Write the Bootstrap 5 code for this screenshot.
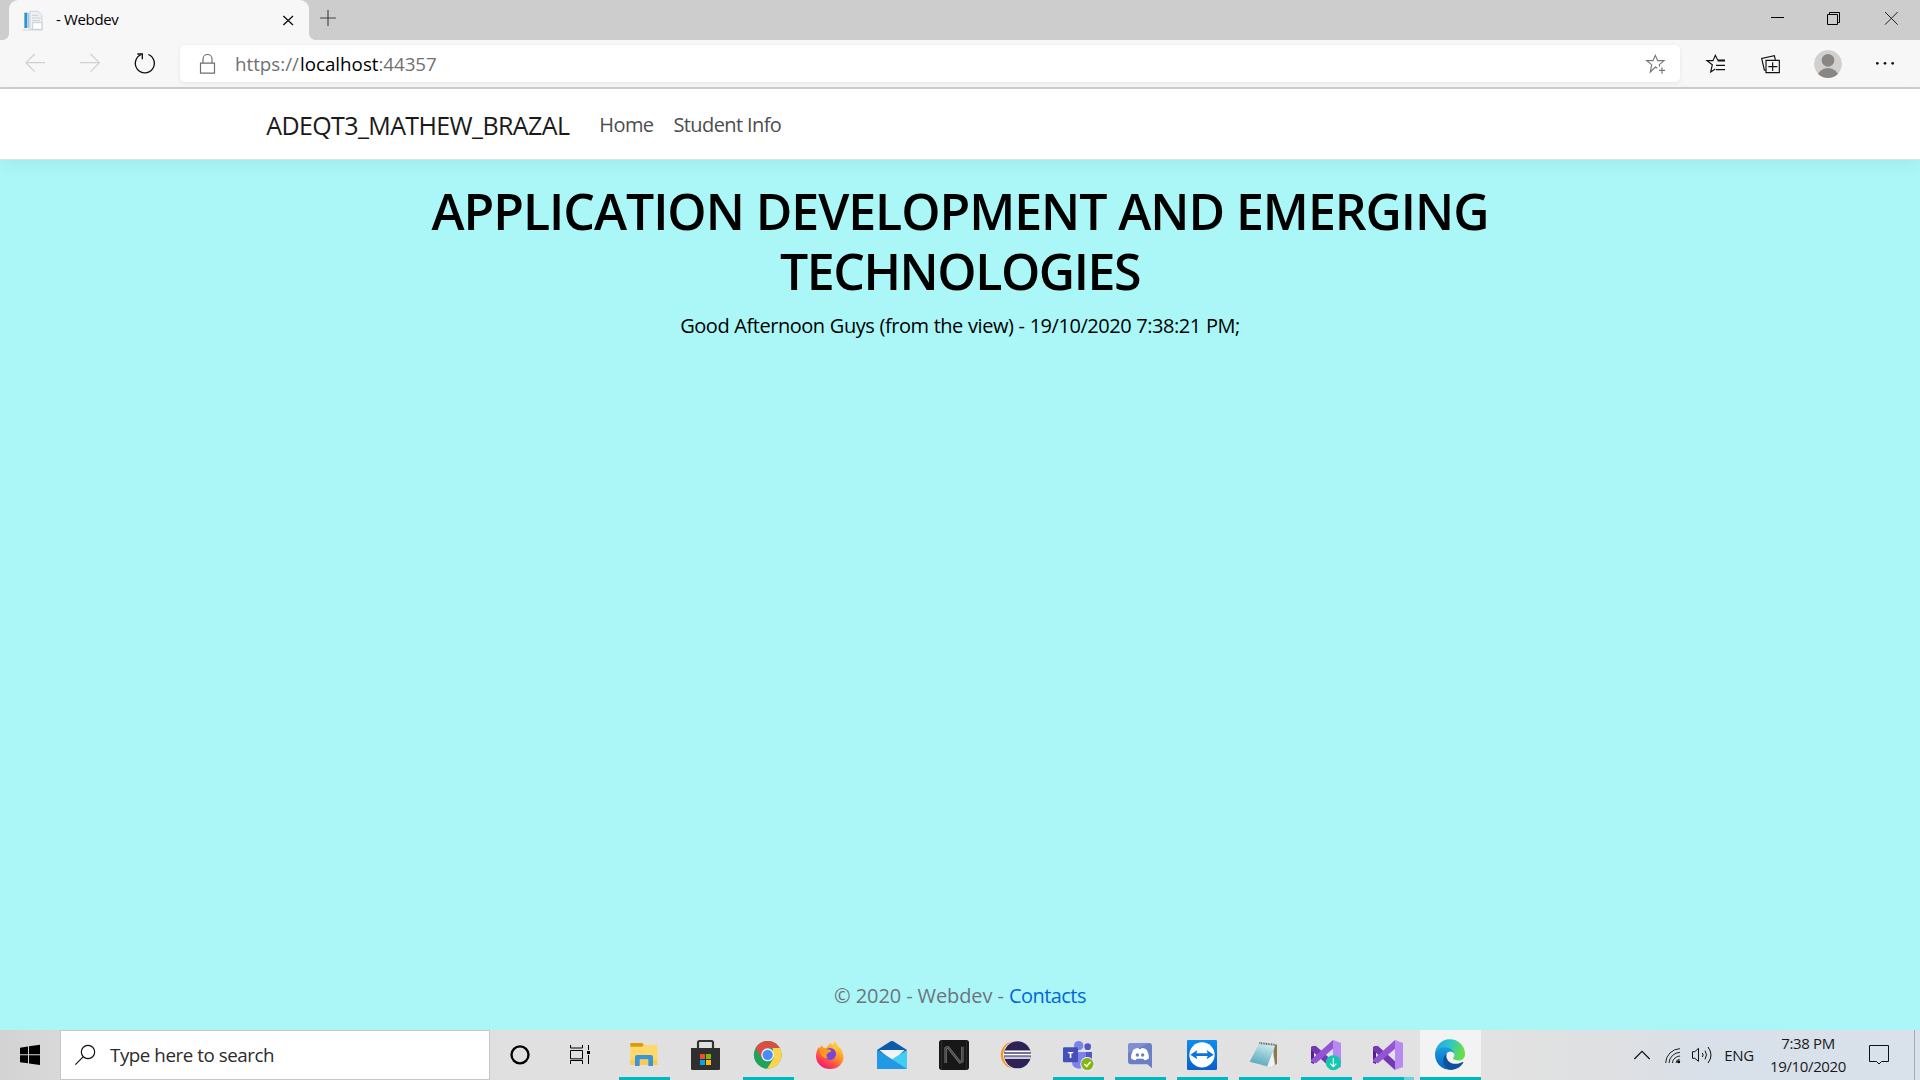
<!DOCTYPE html>
<html lang="en">
<head>
<meta charset="utf-8">
<meta name="viewport" content="width=device-width, initial-scale=1">
<title> - Webdev</title>
<link href="https://cdn.jsdelivr.net/npm/bootstrap@5.3.0/dist/css/bootstrap.min.css" rel="stylesheet">
<style>
html{font-size:20px}
body{font-family:"Open Sans","Noto Sans",sans-serif;height:1080px;overflow:hidden;background:#abf7f8;color:#000}
svg{display:block;flex:none}
span,a{white-space:nowrap}
.tabstrip{height:40px;background:#cdcdcd;padding-left:9px}
.tab-active{width:300px;height:40px;background:#f7f7f7;border-radius:9px 9px 0 0;font-size:15px;letter-spacing:-.35px;position:relative}
.tab-active span{padding-bottom:1px}
.tab-active::before,.tab-active::after{content:"";position:absolute;bottom:0;width:6px;height:6px}
.tab-active::before{left:-6px;background:radial-gradient(circle at 0 0,transparent 5.5px,#f7f7f7 6px)}
.tab-active::after{right:-6px;background:radial-gradient(circle at 100% 0,transparent 5.5px,#f7f7f7 6px)}
.toolbar{height:49px;background:#f7f7f7;border-bottom:2px solid #cdcdcd}
.address{width:1500px;height:37px;background:#fff;border-radius:5px;box-shadow:0 1px 4px rgba(0,0,0,.08);font-size:18.75px;color:#707070}
.address span{padding-top:1px}
.host{margin-left:1px}
.port{letter-spacing:-.08px}
.site-header{height:71px;background:#fff;border-bottom:1px solid #dee2e6;box-shadow:0 5px 15px rgba(0,0,0,.06);z-index:1}
.site-width{width:1425px;max-width:1425px;padding:3px 18.75px 0}
.brand{font-size:25px;letter-spacing:-.61px;color:#1a1a1a;margin-right:30px}
.site-link{font-size:20px;letter-spacing:-.6px;color:#4d4d4d;margin-right:20px;padding-bottom:1px}
.site-main h1{font-size:50px;font-weight:600;line-height:60px;margin:0 0 10px;padding-top:21px}
.line-one{letter-spacing:-1.05px}
.line-two{letter-spacing:-1.45px}
.site-main p{font-size:20px;line-height:30px;letter-spacing:-.46px;word-spacing:.4px}
.site-footer{height:75px;line-height:75px;color:#6c757d;padding-top:3px;letter-spacing:-.1px}
.site-footer a{color:#0366d6;letter-spacing:-.55px}
.taskbar{height:50px;background:linear-gradient(90deg,#d3d3d3 0,#d8d8d8 60px,#e0e0e0 500px,#e2e2e2 1480px,#dfe0e2 1610px,#d8e0ea 1720px,#d9e1ea 1920px)}
.search{width:430px;height:50px;background:#fff;border:1px solid #c6c6c6;font-size:18.75px;letter-spacing:-.45px;color:#2b2b2b}
.app{width:61px;height:50px;margin-right:1px;position:relative}
.running::after{content:"";position:absolute;left:5px;right:5px;bottom:0;height:3px;background:#00b7c3}
.grouped::after{background:linear-gradient(90deg,#00b7c3 41px,#66d4dc 41px)}
.current{background:#f3f3f3}
.current::after{left:0;right:0}
.clock{width:98px;font-size:15px;line-height:23px;letter-spacing:-.35px;color:#1a1a1a;padding-right:2px}
.lang{width:42px;font-size:15px;letter-spacing:-.4px;color:#1a1a1a}
.desk{width:6px;height:50px;border-left:1px solid #a5acb4}
</style>
</head>
<body class="d-flex flex-column">
<div class="tabstrip d-flex">
 <div class="tab-active d-flex align-items-center">
  <svg width="47" height="40" viewBox="27 0 141 120"><path d="M73 38h9v46h-9z" fill="#2f93cf"/><path d="M84 38h4v46h-4z" fill="#9cc8e4"/><path d="M68 90h60" stroke="#c5c9cc" stroke-width="2"/><path d="M90 34h24l12 12v42H90z" fill="#eef1f4" stroke="#c9ced6" stroke-width="2.5"/><path d="M96 46h20M96 54h26M96 62h24" stroke="#cbd0d8" stroke-width="3"/><path d="M98 68h28v20H98z" fill="#fff" stroke="#bfc5cd" stroke-width="2.5"/></svg>
  <span>- Webdev</span>
  <svg class="ms-auto" width="40" height="40" viewBox="807 0 120 120"><path d="M850 48l29 27M879 48l-29 27" stroke="#111" stroke-width="4"/></svg>
 </div>
 <svg width="40" height="40" viewBox="927 0 120 120"><path d="M960 54h48M984 30v48" stroke="#444" stroke-width="3.5"/></svg>
 <div class="d-flex ms-auto">
  <svg width="57" height="40" viewBox="567 0 171 120"><path d="M633 52.5h39" stroke="#000" stroke-width="3"/></svg>
  <svg width="57" height="40" viewBox="738 0 171 120"><path d="M802.500 43.500h30v30h-30zM808.500 43v-5.500h30v30h-5.500" fill="none" stroke="#000" stroke-width="3"/></svg>
  <svg width="57" height="40" viewBox="909 0 171 120"><path d="M975 36l38 38M1013 36l-38 38" stroke="#222" stroke-width="3"/></svg>
 </div>
</div>
<div class="toolbar d-flex align-items-center">
 <svg width="68" height="47" viewBox="0 120 204 141"><path d="M135 188H78M104 162l-26 26 26 27" fill="none" stroke="#cfcfcf" stroke-width="3.500"/></svg>
 <svg width="44" height="47" viewBox="204 120 132 141"><path d="M240 188h58M272 162l26 26-26 27" fill="none" stroke="#cfcfcf" stroke-width="3.500"/></svg>
 <svg width="68" height="47" viewBox="336 120 204 141"><path d="M445 163.500A28.500 28.500 0 1 1 424 163.500" fill="none" stroke="#111" stroke-width="4"/><path d="M412 162h15v16" fill="none" stroke="#111" stroke-width="4"/></svg>
 <div class="address d-flex align-items-center">
  <svg width="55" height="37" viewBox="540 135 165 111"><path d="M601.500 189.500h42v30h-42zM609 189v-12a13 13 0 0 1 27 0v12" fill="none" stroke="#6e6e6e" stroke-width="3.500"/></svg>
  <span>https://</span><span class="host text-black">localhost</span><span class="port">:44357</span>
  <svg class="ms-auto" width="45" height="37" viewBox="225 135 135 111"><path d="M292 205l-6-4-15 15 4-22-15-12h19l7-16 7 16h19l-14 12 1 6M297 211h18M306 202v19" fill="none" stroke="#777" stroke-width="3.500"/></svg>
 </div>
 <div class="d-flex ms-auto">
  <svg width="64" height="47" viewBox="372 120 192 141"><path d="M466 207l-14 9 5-22-16-12h18l7-16 7 14h22M473 183h22M468 196h27M468 209h27" fill="none" stroke="#111" stroke-width="3.500"/></svg>
  <svg width="56" height="47" viewBox="564 120 168 141"><path d="M618 211l-5-1-8-35 38-8 3 12M618 209v9h40v-37h-40v37M638 187v26M625 200h27" fill="none" stroke="#111" stroke-width="3.500"/></svg>
  <svg width="52" height="47" viewBox="732 120 156 141"><clipPath id="av"><circle cx="804" cy="192" r="42"/></clipPath><g clip-path="url(#av)"><circle cx="804" cy="192" r="42" fill="#d2d0ce"/><circle cx="804" cy="181" r="19" fill="#8a8683"/><ellipse cx="804" cy="232" rx="32" ry="28" fill="#8a8683"/></g></svg>
  <svg width="64" height="47" viewBox="888 120 192 141"><g fill="#111"><circle cx="952" cy="190" r="4"/><circle cx="975" cy="190" r="4"/><circle cx="998" cy="190" r="4"/></g></svg>
 </div>
</div>
<header class="site-header">
 <nav class="site-width container-fluid d-flex align-items-center h-100">
  <span class="brand">ADEQT3_MATHEW_BRAZAL</span>
  <span class="site-link">Home</span>
  <span class="site-link">Student Info</span>
 </nav>
</header>
<main class="site-main flex-grow-1 text-center">
 <h1><span class="line-one d-block">APPLICATION DEVELOPMENT AND EMERGING</span><span class="line-two d-block">TECHNOLOGIES</span></h1>
 <p><span>Good Afternoon Guys (from the view) - 19/10/2020 7:38:21 PM;</span></p>
</main>
<footer class="site-footer text-center">© 2020 - Webdev - <a class="text-decoration-none">Contacts</a></footer>
<div class="taskbar d-flex align-items-center">
 <svg width="60" height="50" viewBox="0 30 180 150"><path d="M60 83l24-3.500V103H60zM87 79l33-4.500V103H87zM60 106h24v24L60 127zM87 106h33v29l-33-4.500z"/></svg>
 <div class="search d-flex align-items-center">
  <svg width="49" height="48" viewBox="183 33 147 144"><circle cx="264" cy="96" r="20" fill="none" stroke="#111" stroke-width="3.500"/><path d="M250 110l-24 24" stroke="#111" stroke-width="3.500"/></svg>
  <span>Type here to search</span>
 </div>
 <svg width="60" height="50" viewBox="0 30 180 150"><circle cx="90" cy="104.500" r="25.500" fill="none" stroke="#000" stroke-width="7"/></svg>
 <svg width="64" height="50" viewBox="180 30 192 150"><path d="M241.500 75v9h36v-9M241.500 132v-10.500h36V132M241.500 91.500h36v25h-36zM295.500 75v15M295.500 105v27" fill="none" stroke="#000" stroke-width="3"/><path d="M291 93h9v9h-9z"/></svg>

 <div class="app running"><svg width="61" height="50" viewBox="372 30 183 150"><path d="M421 69h36l4 6v6h-40z" fill="#dd9a09"/><path d="M421 80h35l6-5h40v60h-81z" fill="#ffd869"/><path d="M421 120h81v15h-81z" fill="#fccb50"/><path d="M435 138v-27q0-6 6-6h42q6 0 6 6v27h-14v-20h-26v20z" fill="#3a94d8"/></svg></div>
 <div class="app"><svg width="61" height="50" viewBox="558 30 183 150"><path d="M624 86V68q0-5 5-5h35q5 0 5 5v18" fill="none" stroke="#333" stroke-width="6.500"/><path d="M603 84h87v62q0 4-4 4h-79q-4 0-4-4z" fill="#2f2f2f"/><path d="M630 102h15v15h-15z" fill="#f25022"/><path d="M648 102h15v15h-15z" fill="#7fba00"/><path d="M630 120h15v15h-15z" fill="#00a4ef"/><path d="M648 120h15v15h-15z" fill="#ffb900"/></svg></div>
 <div class="app running"><svg width="61" height="50" viewBox="744 30 183 150"><circle cx="833" cy="104.500" r="41.500" fill="#1fa25a"/><path d="M797 84A41.500 41.500 0 0 1 869 84H833L815 115z" fill="#d94f43"/><path d="M869 84A41.500 41.500 0 0 1 831 146L851 115 848 84z" fill="#ffd24c"/><circle cx="833" cy="104.500" r="19.500" fill="#f2f2f2"/><circle cx="833" cy="104.500" r="15.500" fill="#4a8cf5"/></svg></div>
 <div class="app"><svg width="61" height="50" viewBox="930 30 183 150"><defs><linearGradient id="ff" x1=".8" y1="0" x2=".2" y2="1"><stop offset="0" stop-color="#ffe63d"/><stop offset=".45" stop-color="#ff9127"/><stop offset=".75" stop-color="#ff4050"/><stop offset="1" stop-color="#e31587"/></linearGradient></defs><path d="M979 98c2-8 4-13 9-18l2 6 4-10 7 7 8 1c5-8 9-9 11-15l10 6 2-13c8 7 11 14 13 20 5-1 7 3 8 5 6 12 9 22 7 30-4 18-18 30-39 30-26 0-48-20-42-49z" fill="url(#ff)"/><circle cx="1020" cy="102" r="18" fill="#7a44dc"/><path d="M990 87c8-3 15-2 22 1 8 0 12 3 12 5-3 5-9 3-12 8-5 6-2 11 4 13-14 5-28-9-26-27z" fill="#ff9a20"/><path d="M1020 76c18-2 27 12 26 24-2-7-8-9-12-12-5-6-8-7-14-12z" fill="#ffc535"/></svg></div>
 <div class="app"><svg width="61" height="50" viewBox="6 30 183 150"><path d="M51 90l41-26q4-2 8 0l41 26v18H51z" fill="#0a5ca8"/><path d="M58 90h76l-36 34z" fill="#f3f3f3"/><path d="M51 90l90 57H54q-3 0-3-3z" fill="#1e98e4"/><path d="M141 90v54q0 3-3 3L96 118z" fill="#42cdf5"/><path d="M51 90l45 28 45 29H54q-3 0-3-3z" fill="#2199e4"/></svg></div>
 <div class="app"><svg width="61" height="50" viewBox="192 30 183 150"><rect x="237" y="60" width="90" height="90" rx="8" fill="#171717"/><path d="M245 62v86M319 62v86" stroke="#333" stroke-width="2.500"/><path d="M257 129V84l7-2 36 45 7-3V80" fill="none" stroke="#6a6a6a" stroke-width="8" stroke-linejoin="round"/><path d="M257 129V84l7-2 36 45 7-3V80" fill="none" stroke="#3c3c3c" stroke-width="2.500" stroke-linejoin="round"/></svg></div>
 <div class="app"><svg width="61" height="50" viewBox="378 30 183 150"><circle cx="463" cy="104.500" r="40.500" fill="#f7941e"/><circle cx="472" cy="104.500" r="43" fill="#e3e3e3"/><circle cx="472.500" cy="104.500" r="40.500" fill="#2c2255"/><path d="M434 94h78M432 104h81M434 114h78" stroke="#fff" stroke-width="5"/><path d="M432 99h80M432 109h80" stroke="#8d86b5" stroke-width="3"/></svg></div>
 <div class="app running"><svg width="61" height="50" viewBox="564 30 183 150"><circle cx="683" cy="80" r="10" fill="#5059c9"/><path d="M672 96h24v24q-3 14-24 12z" fill="#5059c9"/><circle cx="656" cy="77" r="14" fill="#7b83eb"/><path d="M636 96h42v30q0 18-21 20-21-2-21-20z" fill="#7b83eb"/><rect x="609" y="82" width="45" height="45" rx="4" fill="#464eb8"/><text x="631" y="114" font-size="28" font-weight="700" text-anchor="middle" fill="#fff">T</text><circle cx="682" cy="132" r="21" fill="#fff"/><circle cx="682" cy="132" r="19" fill="#aaa"/><circle cx="682" cy="132" r="17" fill="#7fba00"/><path d="M673 132l7 7 12-14" fill="none" stroke="#fff" stroke-width="4.500"/></svg></div>
 <div class="app running"><svg width="61" height="50" viewBox="750 30 183 150"><path d="M813 69h54q9 0 9 9v67l-14-12h-49q-9 0-9-9V78q0-9 9-9z" fill="#6b7fc7"/><path d="M804 100V78q0-9 9-9h54z" fill="#7e90d2"/><path d="M820 89q8-6 15-5l2 3h6l2-3q8-1 15 5 8 14 7 26-7 6-14 6l-3-5h-20l-3 5q-8 0-14-6-1-13 7-26z" fill="#fff"/><ellipse cx="832" cy="105" rx="5" ry="5.500" fill="#6b7fc7"/><ellipse cx="848" cy="105" rx="5" ry="5.500" fill="#6b7fc7"/></svg></div>
 <div class="app running"><svg width="61" height="50" viewBox="936 30 183 150"><defs><linearGradient id="tv" x2="0" y2="1"><stop stop-color="#0d8df0"/><stop offset="1" stop-color="#0a5fc8"/></linearGradient></defs><rect x="981" y="60" width="90" height="90" rx="4" fill="url(#tv)"/><circle cx="1026" cy="104.500" r="38" fill="#fff"/><path d="M991 104l21-14-3 10h34l-3-10 21 14-21 14 3-10h-34l3 10z" fill="#0b74da"/></svg></div>
 <div class="app running"><svg width="61" height="50" viewBox="42 30 183 150"><defs><linearGradient id="np" x1=".7" y1="0" x2=".3" y2="1"><stop stop-color="#d5eff2"/><stop offset=".5" stop-color="#8ec8d4"/><stop offset="1" stop-color="#58a5b8"/></linearGradient></defs><path d="M162 76l9-2v58l-14 6z" fill="#8c7a4f"/><path d="M156 74l9 60-12 9-23-6z" fill="#f2f5f5" stroke="#b8c2c5" stroke-width="1.500"/><path d="M118 69l48 6-24 64-53-14z" fill="url(#np)"/><path d="M118 69l51 6" stroke="#5e6b6f" stroke-width="6" stroke-dasharray="3 2"/></svg></div>
 <div class="app running"><svg width="61" height="50" viewBox="228 30 183 150"><path d="M339 60l24 9v72l-24 9z" fill="#b989f2"/><path d="M273 81l9-4v55l-9-4z" fill="#52218a"/><path d="M273 81l14-4 52 47v26L273 90z" fill="#7438b4"/><path d="M273 119l66-59v26l-51 44-15-5z" fill="#9455d4"/><circle cx="340" cy="128" r="22.500" fill="#10c9b0"/><path d="M340 115v24M331 131l9 9 9-9" fill="none" stroke="#fff" stroke-width="3.500"/></svg></div>
 <div class="app running grouped"><svg width="61" height="50" viewBox="414 30 183 150"><path d="M525 60l24 9v72l-24 9z" fill="#b989f2"/><path d="M459 81l9-4v55l-9-4z" fill="#52218a"/><path d="M459 81l14-4 52 47v26L459 90z" fill="#7438b4"/><path d="M459 119l66-59v26l-51 44-15-5z" fill="#9455d4"/></svg></div>
 <div class="app running current"><svg width="61" height="50" viewBox="600 30 183 150"><defs><linearGradient id="e1" x2="1" y2=".25"><stop stop-color="#259fdd"/><stop offset=".5" stop-color="#2cc5cf"/><stop offset="1" stop-color="#66dd4b"/></linearGradient><linearGradient id="e2" x2="0" y2="1"><stop stop-color="#1b9de2"/><stop offset="1" stop-color="#0664b8"/></linearGradient></defs><path d="M645 104A45 45 0 0 1 735 101C736 117 722 123 710 121 700 120 697 116 701 112 707 104 702 92 685 86 668 83 652 90 645 104z" fill="url(#e1)"/><path d="M645 105C646 90 660 80 677 82 691 83 702 93 704 103 701 95 692 92 685 96 672 103 673 120 684 132 690 141 700 147 704 147A45 45 0 0 1 645 105z" fill="url(#e2)"/><path d="M682 98C676 107 680 122 693 129 706 134 719 131 727 126 730 126 731 128 729 130A45 45 0 0 1 697 149.500C670 148 660 116 682 98z" fill="#104f9c"/></svg></div>

 <div class="d-flex align-items-center ms-auto">
  <svg width="28" height="50" viewBox="84 30 84 150"><path d="M103 117l23-23 23 23" fill="none" stroke="#111" stroke-width="3.500"/></svg>
  <svg width="29" height="50" viewBox="168 30 87 150"><path d="M197 129A44 44 0 0 1 240 86M207 129A34 34 0 0 1 240 97M217 129A24 24 0 0 1 240 108" fill="none" stroke="#222" stroke-width="3"/><path d="M228 129A12 12 0 0 1 239 118" fill="none" stroke="#222" stroke-width="3"/><circle cx="236" cy="125" r="4.500"/></svg>
  <svg width="33" height="50" viewBox="255 30 99 150"><path d="M277.500 95h7l11-10v39l-11-9h-7zM307 99q5 6 0 12M315 92q9 12 0 26M324 81q18 24 0 48" fill="none" stroke="#111" stroke-width="3"/></svg>
  <span class="lang text-center">ENG</span>
  <div class="clock text-center">7:38 PM<br>19/10/2020</div>
  <svg width="56" height="50" viewBox="774 30 168 150"><path d="M808.500 76.500h57v48h-21l-7.500 7.500-7.500-7.500h-21z" fill="none" stroke="#111" stroke-width="3"/></svg>
  <div class="desk"></div>
 </div>
</div>
<script src="https://cdn.jsdelivr.net/npm/bootstrap@5.3.0/dist/js/bootstrap.bundle.min.js"></script>
</body>
</html>
